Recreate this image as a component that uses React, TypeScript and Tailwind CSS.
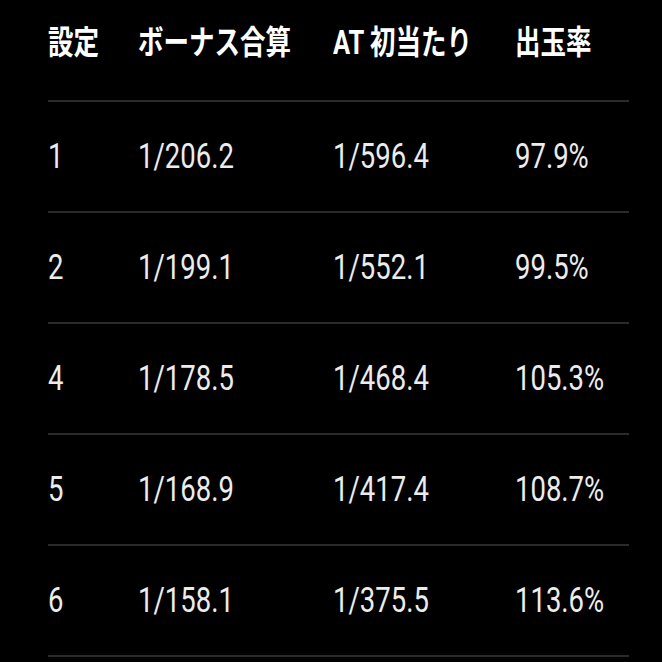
import React from "react";

const rows = [
  { s: "1", bonus: "1/206.2", at: "1/596.4", rate: "97.9%" },
  { s: "2", bonus: "1/199.1", at: "1/552.1", rate: "99.5%" },
  { s: "4", bonus: "1/178.5", at: "1/468.4", rate: "105.3%" },
  { s: "5", bonus: "1/168.9", at: "1/417.4", rate: "108.7%" },
  { s: "6", bonus: "1/158.1", at: "1/375.5", rate: "113.6%" },
];

const cols = "grid grid-cols-[90px_195px_182px_1fr]";

function Cell({ children, bold }: { children: React.ReactNode; bold?: boolean }) {
  return (
    <div className="flex items-center">
      <span
        className={
          bold
            ? "inline-block scale-y-[1.28] text-[25.5px] font-bold leading-none text-white"
            : "inline-block scale-y-[1.26] text-[27.5px] font-normal leading-none text-[#ececec]"
        }
      >
        {children}
      </span>
    </div>
  );
}

export default function App() {
  return (
    <div
      className="min-h-[662px] w-[662px] bg-black"
      style={{ fontFamily: 'Roboto, "Noto Sans CJK JP", sans-serif' }}
    >
      <div className="ml-[48px] w-[581px]">
        <div className={`${cols} h-[102px] border-b-2 border-[#2a2a2a] pb-[12px]`}>
          <Cell bold>設定</Cell>
          <Cell bold>ボーナス合算</Cell>
          <Cell bold>AT 初当たり</Cell>
          <Cell bold>出玉率</Cell>
        </div>
        {rows.map((r) => (
          <div key={r.s} className={`${cols} h-[111px] border-b-2 border-[#2a2a2a]`}>
            <Cell>{r.s}</Cell>
            <Cell>{r.bonus}</Cell>
            <Cell>{r.at}</Cell>
            <Cell>{r.rate}</Cell>
          </div>
        ))}
      </div>
    </div>
  );
}
